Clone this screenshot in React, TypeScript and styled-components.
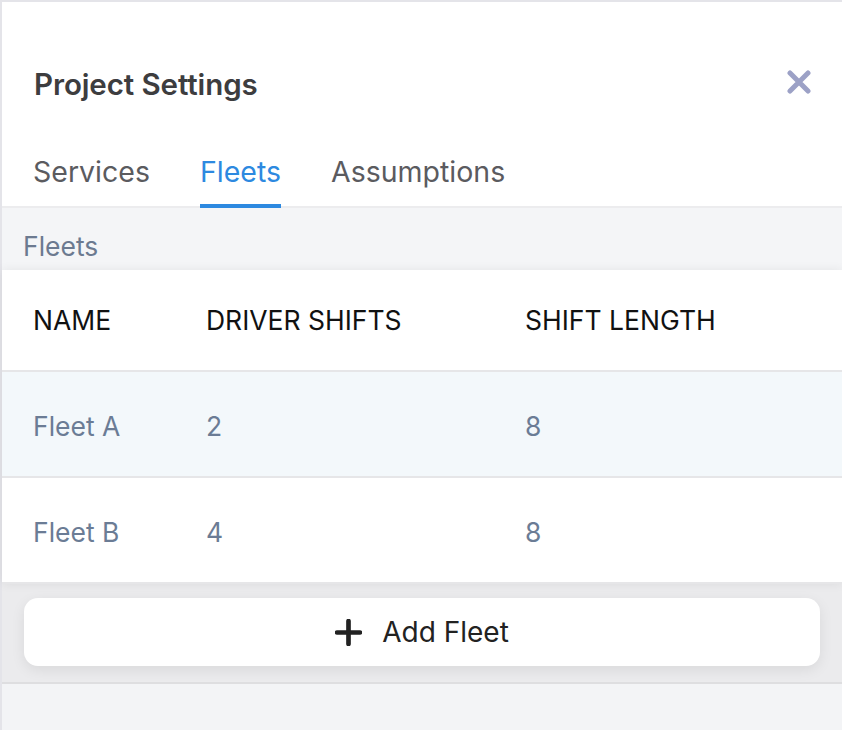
import React from "react";
import styled, { createGlobalStyle } from "styled-components";

const Global = createGlobalStyle`
  html, body { margin: 0; padding: 0; background: #e4e4e9; }
  body { font-family: Inter, "Noto Sans", "Liberation Sans", sans-serif; }
  * { box-sizing: border-box; }
`;

const Page = styled.div`
  padding: 2px 0 0 2px;
  min-height: 730px;
`;

const Panel = styled.div`
  background: #ffffff;
  min-height: 728px;
  display: flex;
  flex-direction: column;
`;

const Header = styled.div`
  display: flex;
  align-items: center;
  justify-content: space-between;
  padding: 46px 30px 0 32px;
  height: 118px;
`;

const Title = styled.h1`
  margin: 0;
  font-size: 29.5px;
  font-weight: 600;
  color: #3d3d3f;
  letter-spacing: -0.1px;
`;

const CloseButton = styled.button`
  border: none;
  background: none;
  padding: 0;
  width: 26px;
  height: 26px;
  display: flex;
  align-items: center;
  justify-content: center;
  cursor: pointer;
  margin-top: -4px;
`;

const Tabs = styled.div`
  display: flex;
  gap: 50px;
  padding: 36px 0 0 31px;
  border-bottom: 2px solid #ececee;
`;

const Tab = styled.div<{ $active?: boolean }>`
  font-size: 28.5px;
  color: ${(p) => (p.$active ? "#2d89e0" : "#5b5b5f")};
  padding-bottom: 16px;
  border-bottom: 4px solid ${(p) => (p.$active ? "#2d89e0" : "transparent")};
  margin-bottom: -2px;
  line-height: 32px;
`;

const Section = styled.div`
  background: #f4f5f7;
  flex: 1;
  display: flex;
  flex-direction: column;
`;

const SectionLabel = styled.div`
  font-size: 26.5px;
  color: #6c7a90;
  padding: 23px 0 0 21px;
  height: 62px;
  line-height: 30px;
`;

const Table = styled.div`
  background: #ffffff;
  box-shadow: 0 0 10px rgba(0, 0, 0, 0.07);
  position: relative;
  z-index: 1;
`;

const Row = styled.div<{ $head?: boolean; $shade?: boolean }>`
  display: grid;
  grid-template-columns: 173px 319px 1fr;
  align-items: center;
  padding-left: 31px;
  height: ${(p) => (p.$head ? "102px" : "106px")};
  background: ${(p) => (p.$shade ? "#f3f8fb" : "#ffffff")};
  border-bottom: 2px solid #e6e6e8;
  font-size: 26.5px;
  color: ${(p) => (p.$head ? "#111111" : "#6b7c95")};
  padding-top: ${(p) => (p.$head ? "0" : "4px")};
`;

const Footer = styled.div`
  background: #ebebed;
  padding: 14px 22px 16px 22px;
  border-bottom: 2px solid #dedee0;
`;

const AddButton = styled.button`
  width: 100%;
  height: 68px;
  border: none;
  border-radius: 14px;
  background: #ffffff;
  box-shadow: 0 4px 14px rgba(0, 0, 0, 0.08);
  display: flex;
  align-items: center;
  justify-content: center;
  gap: 20px;
  font-family: Inter, "Liberation Sans", Arial, sans-serif;
  font-size: 28px;
  color: #222222;
  cursor: pointer;
  padding: 0;
`;

const Rest = styled.div`
  flex: 1;
  background: #f3f4f6;
`;

const fleets = [
  { name: "Fleet A", shifts: 2, length: 8 },
  { name: "Fleet B", shifts: 4, length: 8 },
];

export default function App() {
  return (
    <>
      <Global />
      <Page>
        <Panel>
          <Header>
            <Title>Project Settings</Title>
            <CloseButton aria-label="Close">
              <svg width="24" height="24" viewBox="0 0 24 24">
                <path d="M3 3 L21 21 M21 3 L3 21" stroke="#9ca1c6" strokeWidth="5" strokeLinecap="round" />
              </svg>
            </CloseButton>
          </Header>
          <Tabs>
            <Tab>Services</Tab>
            <Tab $active>Fleets</Tab>
            <Tab>Assumptions</Tab>
          </Tabs>
          <Section>
            <SectionLabel>Fleets</SectionLabel>
            <Table>
              <Row $head>
                <span>NAME</span>
                <span>DRIVER SHIFTS</span>
                <span>SHIFT LENGTH</span>
              </Row>
              {fleets.map((f, i) => (
                <Row key={f.name} $shade={i === 0}>
                  <span>{f.name}</span>
                  <span>{f.shifts}</span>
                  <span>{f.length}</span>
                </Row>
              ))}
            </Table>
            <Footer>
              <AddButton>
                <svg width="27" height="27" viewBox="0 0 26 26">
                  <path d="M13 2 V24 M2 13 H24" stroke="#222" strokeWidth="4.5" strokeLinecap="round" />
                </svg>
                Add Fleet
              </AddButton>
            </Footer>
            <Rest />
          </Section>
        </Panel>
      </Page>
    </>
  );
}
